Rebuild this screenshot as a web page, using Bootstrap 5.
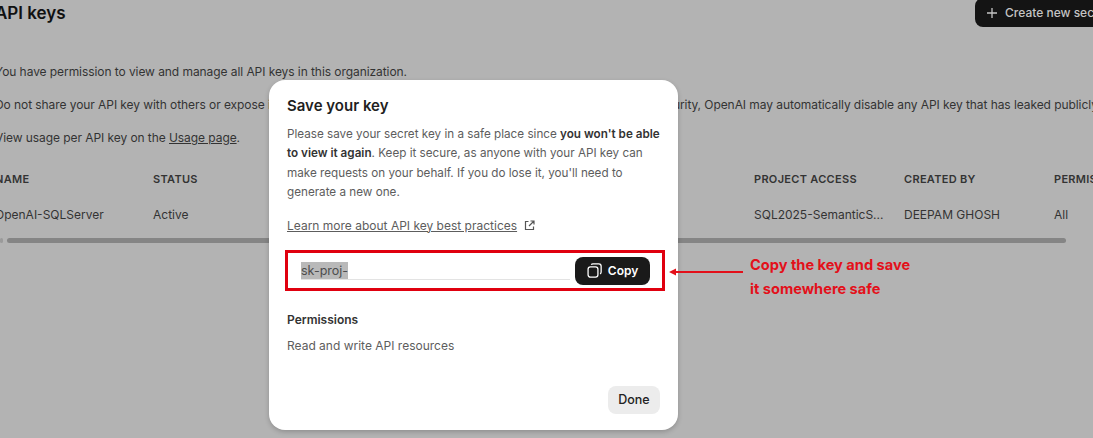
<!DOCTYPE html>
<html>

<head>
  <link href="https://cdn.jsdelivr.net/npm/bootstrap@5.3.2/dist/css/bootstrap.min.css" rel="stylesheet"
    type="text/css" />
  <style>
    html, body { height: 438px; overflow: hidden; }
    body { background: #b3b3b3; font-family: Inter, "Liberation Sans", sans-serif; color: #2b2b2b; font-size: 12px; }
    .page-wrap { width: 1200px; margin-left: -5px; position: relative; height: 438px; }
    .page-head { height: 28px; margin-top: -1px; }
    .page-head h1 { font-size: 17px; font-weight: 600; color: #111; margin: 0; line-height: 28px; }
    .create-btn { position: absolute; left: 980px; top: -1px; width: 200px; height: 29px; background: #141414; color: #c4c4c4; border: 0; border-radius: 8px; font-size: 12px; font-weight: 500; padding: 0 0 0 11px; gap: 7px; }
    .create-btn:hover { background: #141414; color: #c4c4c4; }
    .intro { margin-top: 35px; }
    .intro p { margin: 0 0 14px; line-height: 19px; color: #333; white-space: nowrap; letter-spacing: -.07px; }
    .intro a, .learn-link { color: inherit; }
    .keys-table { table-layout: fixed; width: 1200px; margin: 22px 0 0; --bs-table-bg: transparent; --bs-table-color: #333; }
    .keys-table th, .keys-table td { padding: 0; white-space: nowrap; font-size: 12px; vertical-align: middle; }
    .keys-table th { font-size: 11px; font-weight: 600; letter-spacing: .3px; height: 21px; }
    .keys-table td { font-weight: 400; height: 49px; }
    .track { height: 5px; margin-left: 5px; width: 1066px; margin-top: -1px; gap: 4px; }
    .track-stub { width: 3px; background: #9a9a9a; border-radius: 2px; }
    .track-bar { background: #858585; border-radius: 3px; }
    .key-dialog { position: absolute; left: 269px; top: 80px; width: 409px; height: 350px; background: #fff; border-radius: 16px; padding: 14px 18px 16px; box-shadow: 0 2px 5px rgba(0, 0, 0, .2); color: #5d5d5d; }
    .key-dialog h2 { font-size: 15px; font-weight: 600; color: #1f1f1f; margin: 0 0 7px; line-height: 24px; }
    .key-dialog .blurb { font-size: 11.7px; line-height: 19.4px; margin: 0 0 14px; }
    .key-dialog .blurb b { font-weight: 600; color: #333; }
    .learn-row { line-height: 20px; gap: 7px; margin-top: -1px; }
    .key-row { margin: 14px -1px 0 -2px; height: 41px; border: 3px solid #e0000f; padding: 4px 12px 0 13px; width: 380px; }
    .key-field { width: 270px; height: 23px; border-bottom: 1px solid #e3e3e3; font-size: 12.5px; line-height: 17px; padding-top: 5px; }
    .key-field span { background: #b9b9b9; color: #4d4d4d; display: inline-block; padding: 0; }
    .copy-btn { width: 75px; height: 28px; background: #1a1a1a; color: #fff; border: 0; border-radius: 8px; font-size: 12px; font-weight: 600; padding: 0; margin-left: 5px; gap: 6px; }
    .copy-btn:hover { background: #1a1a1a; color: #fff; }
    .perm-title { font-weight: 600; color: #333; margin-top: 19px; line-height: 20px; }
    .perm-text { margin-top: 6px; line-height: 20px; }
    .done-btn { width: 52px; height: 28px; background: #ececec; color: #222; border: 0; border-radius: 8px; font-size: 12.5px; font-weight: 500; padding: 0; }
    .done-btn:hover { background: #ececec; color: #222; }
    .callout { position: absolute; left: 750px; top: 253px; color: #e3101a; font-size: 14.6px; font-weight: 700; line-height: 24px; }
    .callout-arrow { position: absolute; left: 668px; top: 267px; }
  </style>
</head>

<body>
  <div class="page-wrap">
    <div class="page-head d-flex align-items-center">
      <h1>API keys</h1>
    </div>
    <button class="btn create-btn d-flex align-items-center text-start" type="button">
      <svg width="12" height="12" viewBox="0 0 12 12" fill="none" stroke="#c4c4c4" stroke-width="1.3">
        <path d="M6 1v10M1 6h10" />
      </svg>
      Create new secret key
    </button>

    <div class="intro">
      <p>You have permission to view and manage all API keys in this organization.</p>
      <p>Do not share your API key with others or expose it in the browser or other client-side code. To protect your account's security, OpenAI may automatically disable any API key that has leaked publicly.</p>
      <p>View usage per API key on the <a href="#">Usage page</a>.</p>
    </div>

    <table class="table table-borderless keys-table">
      <colgroup>
        <col style="width: 158px">
        <col style="width: 601px">
        <col style="width: 150px">
        <col style="width: 150px">
        <col>
      </colgroup>
      <thead>
        <tr>
          <th>NAME</th>
          <th>STATUS</th>
          <th>PROJECT ACCESS</th>
          <th>CREATED BY</th>
          <th>PERMISSIONS</th>
        </tr>
      </thead>
      <tbody>
        <tr>
          <td>OpenAI-SQLServer</td>
          <td>Active</td>
          <td>SQL2025-SemanticS...</td>
          <td>DEEPAM GHOSH</td>
          <td>All</td>
        </tr>
      </tbody>
    </table>
    <div class="track d-flex">
      <div class="track-stub"></div>
      <div class="track-bar flex-grow-1"></div>
    </div>
  </div>

  <div class="key-dialog d-flex flex-column">
    <h2>Save your key</h2>
    <p class="blurb">Please save your secret key in a safe place since <b>you won't be able to view it again</b>. Keep it secure, as anyone with your API key can make requests on your behalf. If you do lose it, you'll need to generate a new one.</p>
    <div class="learn-row d-flex align-items-center">
      <a href="#" class="learn-link">Learn more about API key best practices</a>
      <svg width="11" height="11" viewBox="0 0 11 11" fill="none" stroke="#555" stroke-width="1.2">
        <path d="M4.5 1.5H1.5v8h8V6.5M6.5 1H10v3.5M10 1L5 6" />
      </svg>
    </div>
    <div class="key-row d-flex align-items-start">
      <div class="key-field flex-grow-1"><span>sk-proj-</span></div>
      <button class="btn copy-btn d-flex align-items-center justify-content-center" type="button">
        <svg width="15" height="15" viewBox="0 0 14 14" fill="none" stroke="#fff" stroke-width="1.2">
          <rect x="1" y="3.6" width="9.2" height="9.6" rx="2.2" />
          <path d="M4 1.6C4.3 1 4.9 .8 5.6 .8h5.4c1.2 0 2.2 1 2.2 2.2v5.4c0 .8-.4 1.4-1 1.7" />
        </svg>
        Copy
      </button>
    </div>
    <div class="perm-title">Permissions</div>
    <div class="perm-text">Read and write API resources</div>
    <div class="mt-auto d-flex justify-content-end">
      <button class="btn done-btn" type="button">Done</button>
    </div>
  </div>

  <svg class="callout-arrow" width="76" height="10" viewBox="0 0 76 10" fill="#e3101a">
    <path d="M1 5l7-3.5V4h67v2H8v2.5z" />
  </svg>
  <div class="callout">Copy the key and save<br>it somewhere safe</div>

  <script src="https://cdn.jsdelivr.net/npm/bootstrap@5.3.2/dist/js/bootstrap.bundle.min.js"></script>
</body>

</html>
